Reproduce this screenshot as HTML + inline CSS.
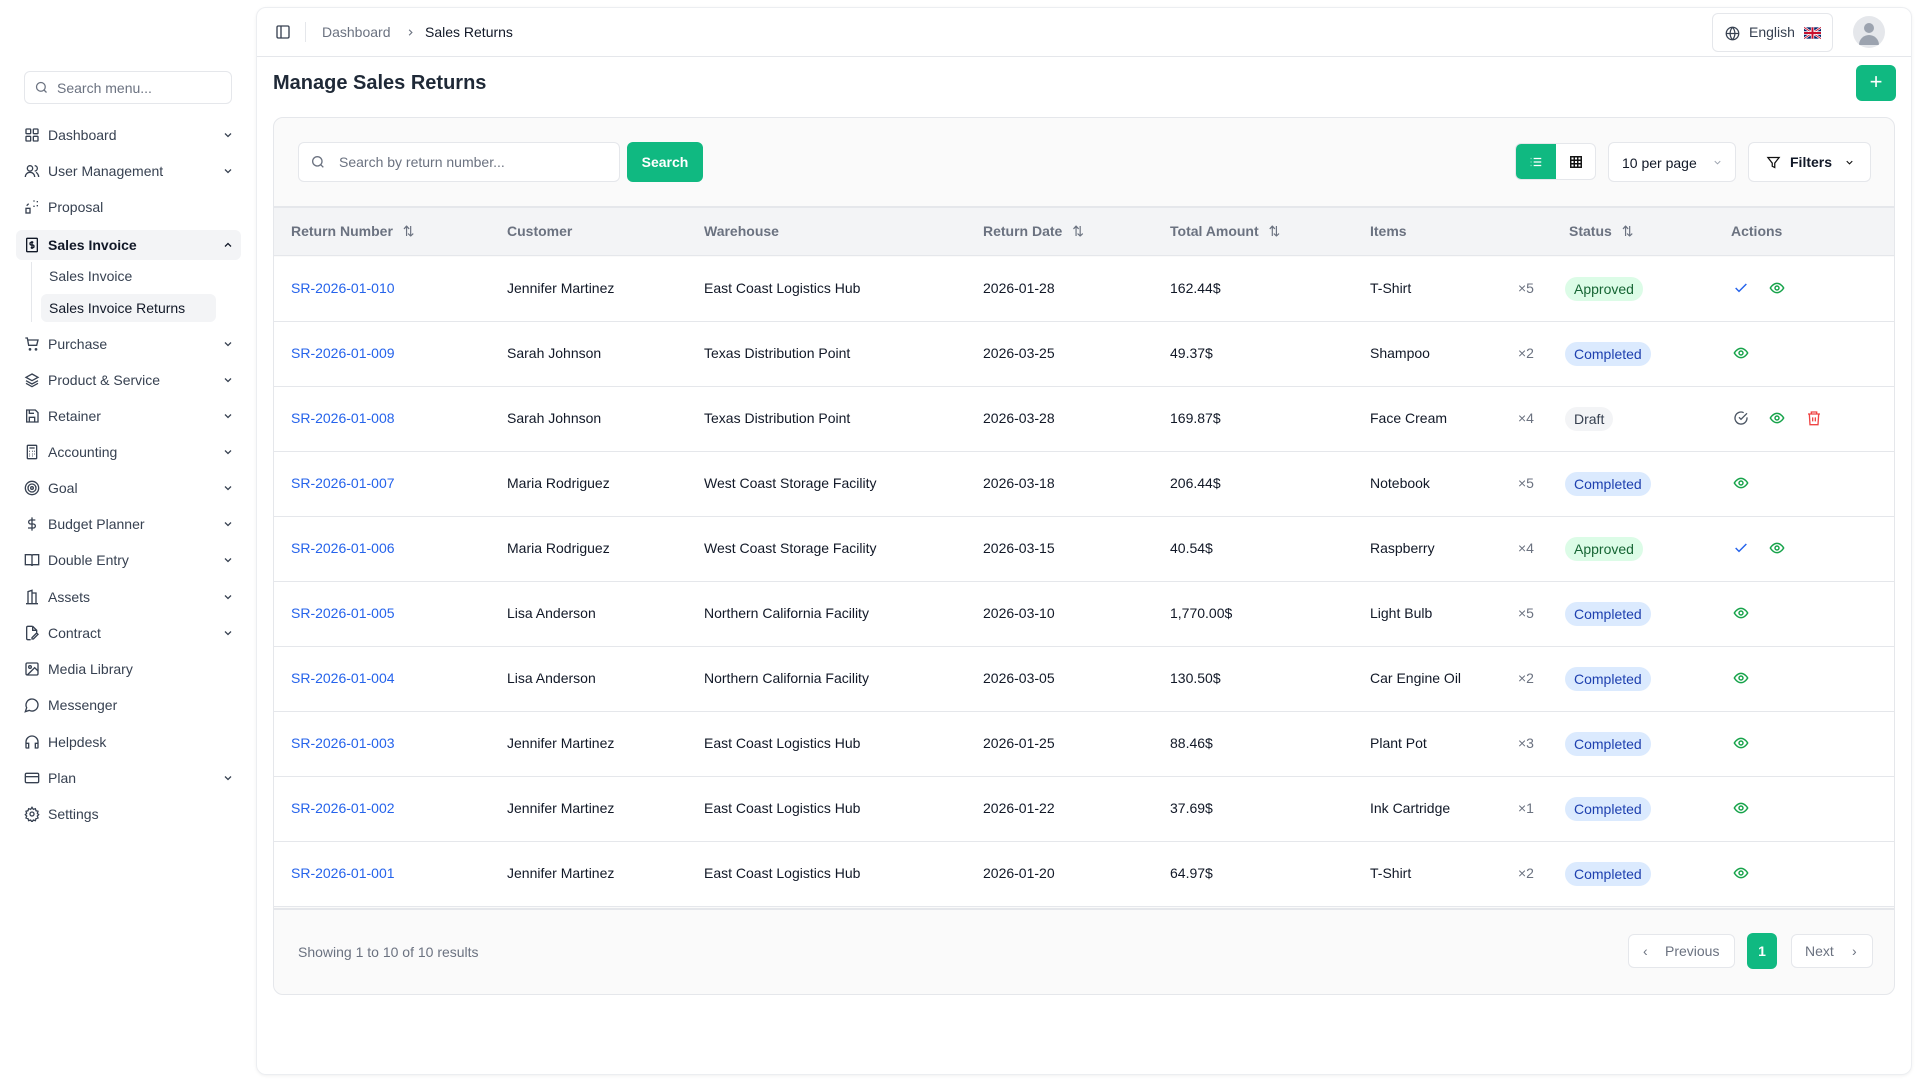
<!DOCTYPE html>
<html><head><meta charset="utf-8"><style>
*{box-sizing:border-box;margin:0;padding:0}
body{width:1920px;height:1080px;background:#fff;font-family:"Liberation Sans",sans-serif;font-size:14px;color:#111827;position:relative;overflow:hidden}
.abs{position:absolute}
.sb-search{left:24px;top:71px;width:208px;height:33px;border:1px solid #e5e7eb;border-radius:6px;color:#6b7280;font-size:14px;padding:8px 0 0 32px}
.mi{position:absolute;left:24px;width:210px;height:30px;color:#374151;font-size:14px;line-height:30px;padding-left:24px}
.mi svg.ic{position:absolute;left:0;top:7px}
.mi .ch{position:absolute;right:0;top:9px}
.main{position:absolute;left:256px;top:7px;width:1656px;height:1068px;border:1px solid #eceef1;border-radius:10px;box-shadow:0 1px 3px rgba(0,0,0,.06)}
.card{position:absolute;left:273px;top:117px;width:1622px;height:878px;border:1px solid #e5e7eb;border-radius:10px;background:#fafafa;overflow:hidden}
.th{position:absolute;top:88px;left:0;right:0;height:50px;background:#f3f4f6;border-top:2px solid #e5e7eb;border-bottom:1px solid #e5e7eb}
.th span{position:absolute;top:15px;font-weight:bold;color:#6b7280;font-size:14px}
.row{position:absolute;left:0;right:0;height:65px;background:#fff;border-bottom:1px solid #e5e7eb}
.row span{position:absolute;top:23px;font-size:14px}
.lnk{color:#2563eb}
.q{color:#6b7280}
.badge{position:absolute;top:20px;height:24px;border-radius:12px;padding:0 9px;line-height:24px;font-size:14px}
.ap{background:#dcfce7;color:#166534}.co{background:#dbeafe;color:#1e40af}.dr{background:#f3f4f6;color:#374151}
.act{position:absolute;top:24px}
.btn{position:absolute;border:1px solid #e5e7eb;border-radius:6px;background:#fff}
</style></head><body>
<div class="abs sb-search"><svg class="abs" style="left:9px;top:8px" width="15" height="15" viewBox="0 0 24 24" fill="none" stroke="#6b7280" stroke-width="2"><circle cx="11" cy="11" r="7"/><path d="M20 20l-4-4"/></svg>Search menu...</div>

<div class="abs" style="left:16px;top:230px;width:225px;height:30px;background:#f3f4f6;border-radius:6px"></div>
<div class="abs" style="left:31px;top:262px;width:1px;height:60px;background:#e5e7eb"></div>
<div class="abs" style="left:41px;top:294px;width:175px;height:28px;background:#f3f4f6;border-radius:6px"></div>

<div class="mi" style="top:120px"><svg class="ic" width="16" height="16" viewBox="0 0 24 24" fill="none" stroke="#374151" stroke-width="2"><rect x="3" y="3" width="7" height="7" rx="1"/><rect x="14" y="3" width="7" height="7" rx="1"/><rect x="3" y="14" width="7" height="7" rx="1"/><rect x="14" y="14" width="7" height="7" rx="1"/></svg>Dashboard<svg class="ch" width="12" height="12" viewBox="0 0 24 24" fill="none" stroke="#374151" stroke-width="2.5"><path d="M6 9l6 6 6-6"/></svg></div>
<div class="mi" style="top:156px"><svg class="ic" width="16" height="16" viewBox="0 0 24 24" fill="none" stroke="#374151" stroke-width="2"><circle cx="9" cy="8" r="4"/><path d="M2 21c0-4 3-7 7-7s7 3 7 7M16 4a4 4 0 010 8M22 21c0-3-2-6-4-7"/></svg>User Management<svg class="ch" width="12" height="12" viewBox="0 0 24 24" fill="none" stroke="#374151" stroke-width="2.5"><path d="M6 9l6 6 6-6"/></svg></div>
<div class="mi" style="top:192px"><svg class="ic" width="16" height="16" viewBox="0 0 24 24" fill="none" stroke="#374151" stroke-width="2"><rect x="3" y="14" width="6" height="7"/><path d="M14 3h2M20 3v2M20 9v2M14 11h2M4 10l3-3"/></svg>Proposal</div>
<div class="mi" style="top:230px;font-weight:bold;color:#111827"><svg class="ic" width="16" height="16" viewBox="0 0 24 24" fill="none" stroke="#111827" stroke-width="2"><rect x="4" y="2" width="16" height="20" rx="1"/><path d="M14 8h-3a2 2 0 000 4h2a2 2 0 010 4h-3M12 6v12"/></svg>Sales Invoice<svg class="ch" width="12" height="12" viewBox="0 0 24 24" fill="none" stroke="#111827" stroke-width="2.5"><path d="M6 15l6-6 6 6"/></svg></div>
<div class="abs" style="left:49px;top:268px;color:#374151">Sales Invoice</div>
<div class="abs" style="left:49px;top:300px;color:#111827">Sales Invoice Returns</div>

<div class="mi" style="top:329px"><svg class="ic" width="16" height="16" viewBox="0 0 24 24" fill="none" stroke="#374151" stroke-width="2"><path d="M2 3h3l2 11h12l2-8H6"/><circle cx="9" cy="20" r="1"/><circle cx="18" cy="20" r="1"/></svg>Purchase<svg class="ch" width="12" height="12" viewBox="0 0 24 24" fill="none" stroke="#374151" stroke-width="2.5"><path d="M6 9l6 6 6-6"/></svg></div>
<div class="mi" style="top:365px"><svg class="ic" width="16" height="16" viewBox="0 0 24 24" fill="none" stroke="#374151" stroke-width="2"><path d="M12 3l9 5-9 5-9-5 9-5zM3 13l9 5 9-5M3 17l9 5 9-5"/></svg>Product &amp; Service<svg class="ch" width="12" height="12" viewBox="0 0 24 24" fill="none" stroke="#374151" stroke-width="2.5"><path d="M6 9l6 6 6-6"/></svg></div>
<div class="mi" style="top:401px"><svg class="ic" width="16" height="16" viewBox="0 0 24 24" fill="none" stroke="#374151" stroke-width="2"><path d="M4 3h13l4 4v14H4z"/><path d="M8 21v-7h8v7M8 3v5h7"/></svg>Retainer<svg class="ch" width="12" height="12" viewBox="0 0 24 24" fill="none" stroke="#374151" stroke-width="2.5"><path d="M6 9l6 6 6-6"/></svg></div>
<div class="mi" style="top:437px"><svg class="ic" width="16" height="16" viewBox="0 0 24 24" fill="none" stroke="#374151" stroke-width="2"><rect x="5" y="2" width="14" height="20" rx="1"/><path d="M8 6h8M8 11h1M12 11h1M15 11h1M8 15h1M12 15h1M15 15h1M8 18h1M12 18h1"/></svg>Accounting<svg class="ch" width="12" height="12" viewBox="0 0 24 24" fill="none" stroke="#374151" stroke-width="2.5"><path d="M6 9l6 6 6-6"/></svg></div>
<div class="mi" style="top:473px"><svg class="ic" width="16" height="16" viewBox="0 0 24 24" fill="none" stroke="#374151" stroke-width="2"><circle cx="12" cy="12" r="10"/><circle cx="12" cy="12" r="6"/><circle cx="12" cy="12" r="2"/></svg>Goal<svg class="ch" width="12" height="12" viewBox="0 0 24 24" fill="none" stroke="#374151" stroke-width="2.5"><path d="M6 9l6 6 6-6"/></svg></div>
<div class="mi" style="top:509px"><svg class="ic" width="16" height="16" viewBox="0 0 24 24" fill="none" stroke="#374151" stroke-width="2"><path d="M12 2v20M17 6H10a3 3 0 000 6h4a3 3 0 010 6H6"/></svg>Budget Planner<svg class="ch" width="12" height="12" viewBox="0 0 24 24" fill="none" stroke="#374151" stroke-width="2.5"><path d="M6 9l6 6 6-6"/></svg></div>
<div class="mi" style="top:545px"><svg class="ic" width="16" height="16" viewBox="0 0 24 24" fill="none" stroke="#374151" stroke-width="2"><path d="M2 4h8a2 2 0 012 2v15a2 2 0 00-2-2H2zM22 4h-8a2 2 0 00-2 2v15a2 2 0 012-2h8z"/></svg>Double Entry<svg class="ch" width="12" height="12" viewBox="0 0 24 24" fill="none" stroke="#374151" stroke-width="2.5"><path d="M6 9l6 6 6-6"/></svg></div>
<div class="mi" style="top:582px"><svg class="ic" width="16" height="16" viewBox="0 0 24 24" fill="none" stroke="#374151" stroke-width="2"><path d="M6 22V4l6-2v20M12 6h6v16M3 22h18"/></svg>Assets<svg class="ch" width="12" height="12" viewBox="0 0 24 24" fill="none" stroke="#374151" stroke-width="2.5"><path d="M6 9l6 6 6-6"/></svg></div>
<div class="mi" style="top:618px"><svg class="ic" width="16" height="16" viewBox="0 0 24 24" fill="none" stroke="#374151" stroke-width="2"><path d="M13 2H6a2 2 0 00-2 2v16a2 2 0 002 2h4M13 2l6 6v3M13 2v6h6M14 21l7-7-2-2-7 7v2z"/></svg>Contract<svg class="ch" width="12" height="12" viewBox="0 0 24 24" fill="none" stroke="#374151" stroke-width="2.5"><path d="M6 9l6 6 6-6"/></svg></div>
<div class="mi" style="top:654px"><svg class="ic" width="16" height="16" viewBox="0 0 24 24" fill="none" stroke="#374151" stroke-width="2"><rect x="3" y="3" width="18" height="18" rx="2"/><circle cx="9" cy="9" r="2"/><path d="M21 15l-5-5L5 21"/></svg>Media Library</div>
<div class="mi" style="top:690px"><svg class="ic" width="16" height="16" viewBox="0 0 24 24" fill="none" stroke="#374151" stroke-width="2"><path d="M7.9 20A9 9 0 104 16.1L2 22z"/></svg>Messenger</div>
<div class="mi" style="top:727px"><svg class="ic" width="16" height="16" viewBox="0 0 24 24" fill="none" stroke="#374151" stroke-width="2"><path d="M3 18v-6a9 9 0 0118 0v6M3 14h4v7H4a1 1 0 01-1-1zM21 14h-4v7h3a1 1 0 001-1z"/></svg>Helpdesk</div>
<div class="mi" style="top:763px"><svg class="ic" width="16" height="16" viewBox="0 0 24 24" fill="none" stroke="#374151" stroke-width="2"><rect x="2" y="5" width="20" height="14" rx="2"/><path d="M2 10h20"/></svg>Plan<svg class="ch" width="12" height="12" viewBox="0 0 24 24" fill="none" stroke="#374151" stroke-width="2.5"><path d="M6 9l6 6 6-6"/></svg></div>
<div class="mi" style="top:799px"><svg class="ic" width="16" height="16" viewBox="0 0 24 24" fill="none" stroke="#374151" stroke-width="2"><circle cx="12" cy="12" r="3"/><path d="M12 2l2 3 3-1 1 3 3 1-1 3 2 2-2 2 1 3-3 1-1 3-3-1-2 3-2-3-3 1-1-3-3-1 1-3-2-2 2-2-1-3 3-1 1-3 3 1z"/></svg>Settings</div>

<div class="main">
  <div class="abs" style="left:0;right:0;top:48px;height:1px;background:#e5e7eb"></div>
  <svg class="abs" style="left:18px;top:16px" width="16" height="16" viewBox="0 0 24 24" fill="none" stroke="#374151" stroke-width="2"><rect x="3" y="3" width="18" height="18" rx="2"/><path d="M9 3v18"/></svg>
  <div class="abs" style="left:48px;top:14px;width:1px;height:20px;background:#e5e7eb"></div>
  <div class="abs" style="left:65px;top:16px;color:#6b7280">Dashboard</div>
  <svg class="abs" style="left:148px;top:19px" width="11" height="11" viewBox="0 0 24 24" fill="none" stroke="#6b7280" stroke-width="2.5"><path d="M9 6l6 6-6 6"/></svg>
  <div class="abs" style="left:168px;top:16px;color:#111827">Sales Returns</div>
  <div class="btn" style="left:1455px;top:5px;width:121px;height:39px"><svg class="abs" style="left:12px;top:12px" width="15" height="15" viewBox="0 0 24 24" fill="none" stroke="#374151" stroke-width="2"><circle cx="12" cy="12" r="10"/><path d="M2 12h20M12 2a15 15 0 010 20M12 2a15 15 0 000 20"/></svg><span class="abs" style="left:36px;top:10px;color:#374151">English</span>
  <svg class="abs" style="left:91px;top:13px" width="17" height="12" viewBox="0 0 60 40"><rect width="60" height="40" fill="#012169"/><path d="M0 0L60 40M60 0L0 40" stroke="#fff" stroke-width="8"/><path d="M0 0L60 40M60 0L0 40" stroke="#c8102e" stroke-width="3"/><path d="M30 0v40M0 20h60" stroke="#fff" stroke-width="12"/><path d="M30 0v40M0 20h60" stroke="#c8102e" stroke-width="7"/></svg></div>
  <div class="abs" style="left:1596px;top:8px;width:32px;height:32px;border-radius:50%;background:#e5e7eb;overflow:hidden"><div class="abs" style="left:11px;top:7px;width:10px;height:10px;border-radius:50%;background:#9ca3af"></div><div class="abs" style="left:6px;top:19px;width:20px;height:10px;border-radius:10px 10px 0 0;background:#9ca3af"></div></div>
  <div class="abs" style="left:16px;top:64px;font-size:20px;font-weight:bold;color:#1f2937">Manage Sales Returns</div>
  <div class="abs" style="left:1599px;top:57px;width:40px;height:36px;background:#10b981;border-radius:6px;color:#fff;font-size:22px;text-align:center;line-height:34px">+</div>
</div>

<div class="card">
  <div class="btn" style="left:24px;top:24px;width:322px;height:40px"><svg class="abs" style="left:11px;top:11px" width="16" height="16" viewBox="0 0 24 24" fill="none" stroke="#6b7280" stroke-width="2"><circle cx="11" cy="11" r="7"/><path d="M20 20l-4-4"/></svg><span class="abs" style="left:40px;top:11px;color:#6b7280">Search by return number...</span></div>
  <div class="abs" style="left:353px;top:24px;width:76px;height:40px;background:#10b981;border-radius:6px;color:#fff;font-weight:bold;text-align:center;line-height:40px">Search</div>
  <div class="btn" style="left:1241px;top:25px;width:81px;height:37px;overflow:hidden"><div class="abs" style="left:0;top:0;width:40px;height:37px;background:#10b981"></div>
  <svg class="abs" style="left:13px;top:11px" width="14" height="14" viewBox="0 0 24 24" fill="none" stroke="#fff" stroke-width="2"><path d="M8 6h13M8 12h13M8 18h13M3 6h1M3 12h1M3 18h1"/></svg>
  <svg class="abs" style="left:53px;top:11px" width="14" height="14" viewBox="0 0 24 24" fill="none" stroke="#111" stroke-width="2.5"><rect x="3" y="3" width="18" height="18"/><path d="M3 9h18M3 15h18M9 3v18M15 3v18"/></svg></div>
  <div class="btn" style="left:1334px;top:24px;width:128px;height:40px"><span class="abs" style="left:13px;top:12px;color:#111827">10 per page</span><svg class="abs" style="left:103px;top:14px" width="11" height="11" viewBox="0 0 24 24" fill="none" stroke="#9ca3af" stroke-width="2"><path d="M6 9l6 6 6-6"/></svg></div>
  <div class="btn" style="left:1474px;top:24px;width:123px;height:40px"><svg class="abs" style="left:17px;top:12px" width="15" height="15" viewBox="0 0 24 24" fill="none" stroke="#111" stroke-width="2"><path d="M3 4h18l-7 9v7l-4-2v-5z"/></svg><span class="abs" style="left:41px;top:11px;font-weight:bold;color:#111827">Filters</span><svg class="abs" style="left:95px;top:14px" width="11" height="11" viewBox="0 0 24 24" fill="none" stroke="#111" stroke-width="2.5"><path d="M6 9l6 6 6-6"/></svg></div>

  <div class="th">
    <span style="left:17px">Return Number <span style="position:static;font-weight:normal;margin-left:6px">⇅</span></span>
    <span style="left:233px">Customer</span>
    <span style="left:430px">Warehouse</span>
    <span style="left:709px">Return Date <span style="position:static;font-weight:normal;margin-left:6px">⇅</span></span>
    <span style="left:896px">Total Amount <span style="position:static;font-weight:normal;margin-left:6px">⇅</span></span>
    <span style="left:1096px">Items</span>
    <span style="left:1295px">Status <span style="position:static;font-weight:normal;margin-left:6px">⇅</span></span>
    <span style="left:1457px">Actions</span>
  </div>
  <div id="rows"></div>
  <div class="abs" style="left:0;right:0;top:790px;height:2px;background:#e5e7eb"></div>
  <div class="abs" style="left:24px;top:826px;color:#6b7280">Showing 1 to 10 of 10 results</div>
  <div class="btn" style="left:1354px;top:816px;width:107px;height:34px;color:#6b7280"><span class="abs" style="left:14px;top:8px">‹</span><span class="abs" style="left:36px;top:8px">Previous</span></div>
  <div class="abs" style="left:1473px;top:815px;width:30px;height:36px;background:#10b981;border-radius:6px;color:#fff;font-weight:bold;text-align:center;line-height:36px">1</div>
  <div class="btn" style="left:1517px;top:816px;width:82px;height:34px;color:#6b7280"><span class="abs" style="left:13px;top:8px">Next</span><span class="abs" style="left:60px;top:8px">›</span></div>
</div>
<script>
var d=[["010","Jennifer Martinez","East Coast Logistics Hub","2026-01-28","162.44$","T-Shirt",5,"Approved"],
["009","Sarah Johnson","Texas Distribution Point","2026-03-25","49.37$","Shampoo",2,"Completed"],
["008","Sarah Johnson","Texas Distribution Point","2026-03-28","169.87$","Face Cream",4,"Draft"],
["007","Maria Rodriguez","West Coast Storage Facility","2026-03-18","206.44$","Notebook",5,"Completed"],
["006","Maria Rodriguez","West Coast Storage Facility","2026-03-15","40.54$","Raspberry",4,"Approved"],
["005","Lisa Anderson","Northern California Facility","2026-03-10","1,770.00$","Light Bulb",5,"Completed"],
["004","Lisa Anderson","Northern California Facility","2026-03-05","130.50$","Car Engine Oil",2,"Completed"],
["003","Jennifer Martinez","East Coast Logistics Hub","2026-01-25","88.46$","Plant Pot",3,"Completed"],
["002","Jennifer Martinez","East Coast Logistics Hub","2026-01-22","37.69$","Ink Cartridge",1,"Completed"],
["001","Jennifer Martinez","East Coast Logistics Hub","2026-01-20","64.97$","T-Shirt",2,"Completed"]];
var eye='<svg width="16" height="16" viewBox="0 0 24 24" fill="none" stroke="#16a34a" stroke-width="2.2"><path d="M2 12s4-7 10-7 10 7 10 7-4 7-10 7S2 12 2 12z"/><circle cx="12" cy="12" r="3"/></svg>';
var chk='<svg width="16" height="16" viewBox="0 0 24 24" fill="none" stroke="#2563eb" stroke-width="2.2"><path d="M4 12l5 5L20 6"/></svg>';
var cchk='<svg width="16" height="16" viewBox="0 0 24 24" fill="none" stroke="#4b5563" stroke-width="2"><path d="M21 11v1a9 9 0 11-5-8"/><path d="M9 11l3 3 9-9"/></svg>';
var tr='<svg width="16" height="16" viewBox="0 0 24 24" fill="none" stroke="#ef4444" stroke-width="2"><path d="M3 6h18M8 6V3h8v3M5 6l1 16h12l1-16M10 11v6M14 11v6"/></svg>';
var A=1459,B=1495,C=1532;
var h='';
d.forEach(function(r,i){
 var cls=r[7]=="Approved"?"ap":r[7]=="Draft"?"dr":"co";
 var a=r[7]=="Approved"?'<span class="act" style="left:'+A+'px">'+chk+'</span><span class="act" style="left:'+B+'px">'+eye+'</span>':r[7]=="Draft"?'<span class="act" style="left:'+A+'px">'+cchk+'</span><span class="act" style="left:'+B+'px">'+eye+'</span><span class="act" style="left:'+C+'px">'+tr+'</span>':'<span class="act" style="left:'+A+'px">'+eye+'</span>';
 h+='<div class="row" style="top:'+(139+i*65)+'px"><span class="lnk" style="left:17px">SR-2026-01-'+r[0]+'</span><span style="left:233px">'+r[1]+'</span><span style="left:430px">'+r[2]+'</span><span style="left:709px">'+r[3]+'</span><span style="left:896px">'+r[4]+'</span><span style="left:1096px">'+r[5]+'</span><span class="q" style="left:1244px">×'+r[6]+'</span><div class="badge '+cls+'" style="left:1291px">'+r[7]+'</div>'+a+'</div>';
});
document.getElementById('rows').innerHTML=h;
</script>
</body></html>
